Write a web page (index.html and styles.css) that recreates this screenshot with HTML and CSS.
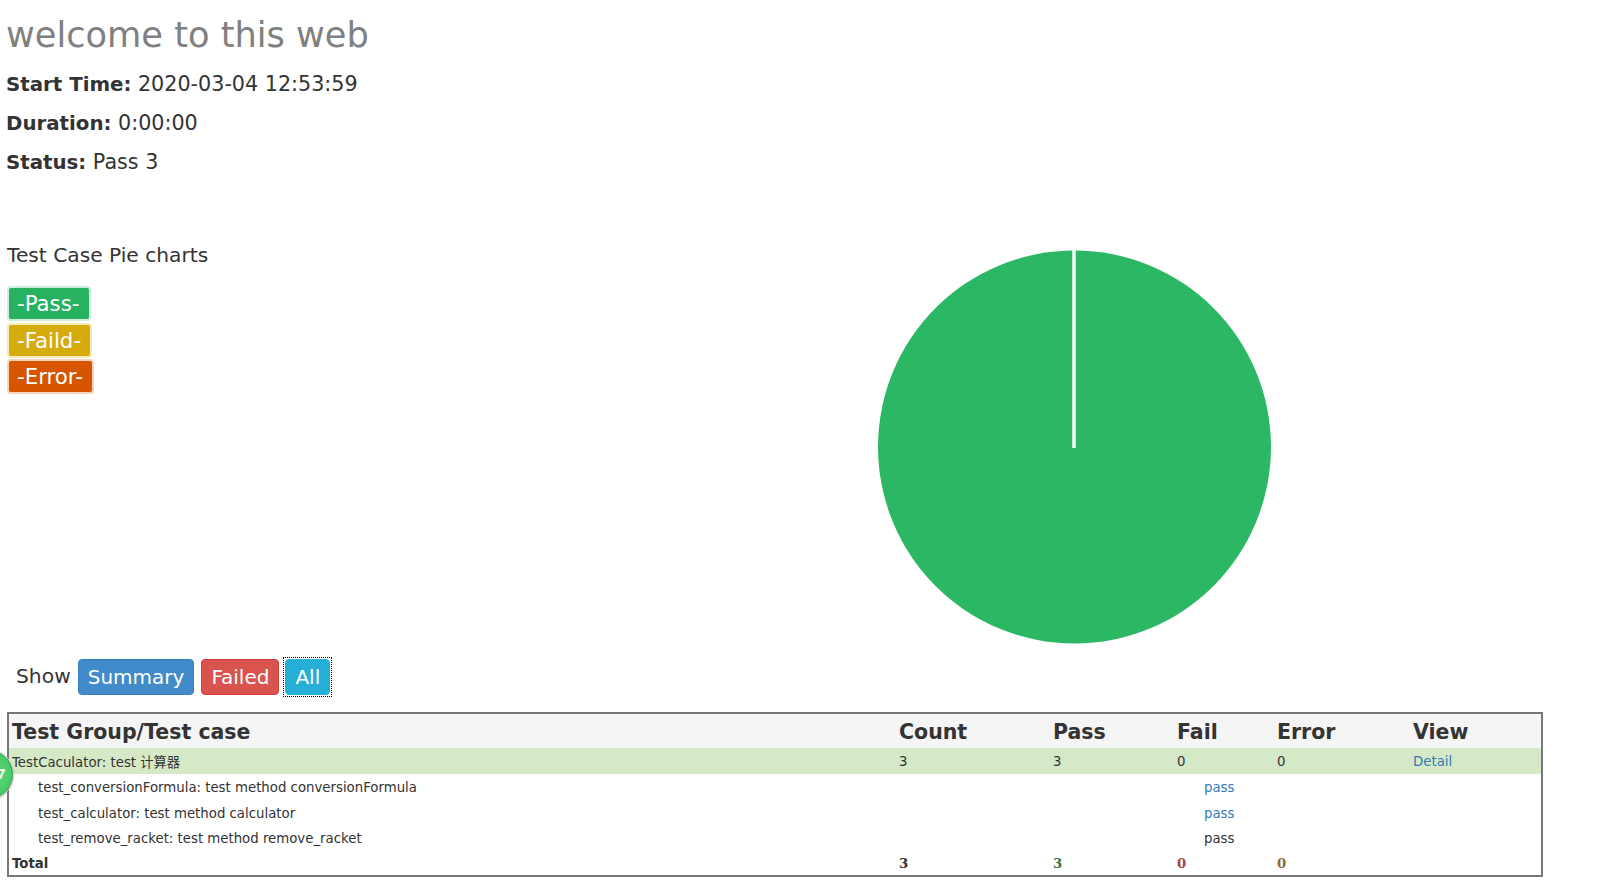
FILE: index.html
```html
<!DOCTYPE html>
<html lang="en">
<head>
  <meta charset="UTF-8">
  <title>welcome to this web</title>
  <link rel="stylesheet" href="styles.css">
</head>
<body>
  <div class="badge">7</div>

  <div class="heading">
    <h1>welcome to this web</h1>
    <p><strong>Start Time:</strong> 2020-03-04 12:53:59</p>
    <p><strong>Duration:</strong> 0:00:00</p>
    <p><strong>Status:</strong> Pass 3</p>
  </div>

  <div class="chart-row">
    <div class="chart-legend">
      <p class="chart-title">Test Case Pie charts</p>
      <span class="tag tag-pass">-Pass-</span>
      <span class="tag tag-fail">-Faild-</span>
      <span class="tag tag-error">-Error-</span>
    </div>
    <svg class="pie" width="394" height="396" viewBox="0 0 394 396">
      <circle cx="197.5" cy="197" r="196.5" fill="#2bb763"/>
      <line x1="197" y1="0" x2="197" y2="198" stroke="#f4fbf6" stroke-width="3.5"/>
    </svg>
  </div>

  <div class="filter">
    <span class="filter-label">Show</span>
    <a class="btn btn-primary">Summary</a>
    <a class="btn btn-danger">Failed</a>
    <a class="btn btn-info">All</a>
  </div>

  <table class="result">
    <colgroup>
      <col class="col-name">
      <col class="col-count">
      <col class="col-pass">
      <col class="col-fail">
      <col class="col-error">
      <col class="col-view">
    </colgroup>
    <tr class="head">
      <td>Test Group/Test case</td>
      <td>Count</td>
      <td>Pass</td>
      <td>Fail</td>
      <td>Error</td>
      <td>View</td>
    </tr>
    <tr class="group">
      <td>TestCaculator: test 计算器</td>
      <td>3</td>
      <td>3</td>
      <td>0</td>
      <td>0</td>
      <td><a href="#">Detail</a></td>
    </tr>
    <tr>
      <td class="case">test_conversionFormula: test method conversionFormula</td>
      <td colspan="5" class="status"><a href="#">pass</a></td>
    </tr>
    <tr>
      <td class="case">test_calculator: test method calculator</td>
      <td colspan="5" class="status"><a href="#">pass</a></td>
    </tr>
    <tr>
      <td class="case">test_remove_racket: test method remove_racket</td>
      <td colspan="5" class="status">pass</td>
    </tr>
    <tr class="total">
      <td>Total</td>
      <td class="num">3</td>
      <td class="num text-success">3</td>
      <td class="num text-danger">0</td>
      <td class="num text-warning">0</td>
      <td></td>
    </tr>
  </table>
</body>
</html>
```

FILE: styles.css
```css
* {
  box-sizing: border-box;
}
body {
  font-family: "DejaVu Sans", "Noto Sans CJK SC", sans-serif;
  background-color: #fff;
  color: #333;
  margin: 0;
  padding: 0 7px;
  overflow: hidden;
  height: 892px;
  position: relative;
}
a {
  color: #337ab7;
  text-decoration: none;
}
h1 {
  font-size: 35.2px;
  font-weight: 400;
  line-height: 40px;
  color: #808080;
  margin: 0;
  padding: 15px 0 17px;
}
.heading {
  margin-left: -1px;
}
.heading p {
  font-size: 20.7px;
  line-height: 25px;
  margin: 0 0 14px;
}
.heading strong {
  font-size: 19.8px;
}
.chart-row {
  display: flex;
  justify-content: space-between;
  margin-top: 62px;
  padding-right: 334px;
}
.chart-legend {
  display: flex;
  flex-direction: column;
  align-items: flex-start;
  padding-top: 6px;
}
.chart-title {
  font-size: 20.2px;
  line-height: 24px;
  margin: 0 0 19px;
  color: #333;
}
.tag {
  display: block;
  font-size: 21.3px;
  line-height: 31px;
  color: #fff;
  padding: 0 9px 0 8px;
  height: 35px;
  margin: 0 0 1.5px 0;
  border-radius: 4px;
  border: 2px solid;
}
.tag-pass {
  background-color: #27b261;
  border-color: #cdeedb;
}
.tag-fail {
  background-color: #d6ab0d;
  border-color: #f6e9b8;
}
.tag-error {
  background-color: #d75400;
  border-color: #f8d3bb;
}
.pie {
  display: block;
  margin-top: 13px;
}
.filter {
  display: flex;
  align-items: center;
  gap: 7px;
  padding-left: 9px;
  margin-top: 13px;
  height: 36px;
}
.filter-label {
  font-size: 20.3px;
  padding-bottom: 3px;
}
.btn {
  font-size: 20px;
  line-height: 34px;
  height: 36px;
  padding: 0 9px;
  color: #fff;
  border: 1px solid;
  border-radius: 4px;
  position: relative;
}
.btn-primary {
  background-color: #428bca;
  border-color: #357ebd;
}
.btn-danger {
  background-color: #d9534f;
  border-color: #d43f3a;
}
.btn-info {
  background-color: #27aed6;
  border-color: #27aed6;
  margin-left: -1px;
}
/* focus ring drawn square, the button keeps its round corners */
.btn-info::after {
  content: "";
  position: absolute;
  top: -3px;
  left: -3px;
  right: -3px;
  bottom: -3px;
  border: 1px dotted #000;
}
.result {
  width: 1536px;
  table-layout: fixed;
  border-collapse: collapse;
  border: 2px solid #777;
  margin-top: 17px;
  font-size: 13.3px;
  color: #333;
}
.col-name { width: 888px; }
.col-count { width: 154px; }
.col-pass { width: 124px; }
.col-fail { width: 100px; }
.col-error { width: 136px; }
.result td {
  padding: 2px 3px 0;
  height: 25.5px;
  white-space: nowrap;
}
.result .head td {
  height: 35px;
  background-color: #f5f5f5;
  font-size: 20.5px;
  font-weight: 700;
}
.result .group td {
  height: 26px;
  padding-top: 0;
  background-color: #d6e9c6;
}
.result .case {
  padding-left: 29px;
}
.result .status {
  padding-left: 308px;
}
.result .total td {
  font-weight: 700;
  height: 25px;
}
.result .total .num {
  font-family: "DejaVu Serif", serif;
}
.text-success { color: #3c763d; }
.text-danger { color: #a94442; }
.text-warning { color: #8a6d3b; }
.badge {
  position: absolute;
  left: -36px;
  top: 750px;
  width: 49px;
  height: 49px;
  border-radius: 50%;
  background: radial-gradient(circle at 60% 50%, #62d97f 0%, #45c964 60%, #36b453 90%);
  border: 1px solid #2f9e4a;
  box-shadow: 0 0 0 1px #d5d5d5, 0 1px 3px rgba(0, 0, 0, 0.4);
  color: #e8f8ec;
  font-size: 14px;
  font-weight: 700;
  line-height: 46px;
  text-align: right;
  padding-right: 6px;
  z-index: 2;
}
```
